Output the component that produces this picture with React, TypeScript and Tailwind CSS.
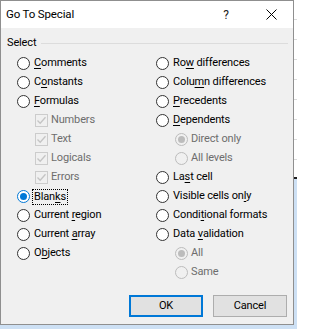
import React from "react";

type Item = {
  label: string;
  u?: number; // index of the access-key letter
  kind: "radio" | "check" | "subradio";
  checked?: boolean;
  disabled?: boolean;
  focus?: boolean;
};

const left: Item[] = [
  { label: "Comments", u: 0, kind: "radio" },
  { label: "Constants", u: 1, kind: "radio" },
  { label: "Formulas", u: 0, kind: "radio" },
  { label: "Numbers", kind: "check", checked: true, disabled: true },
  { label: "Text", kind: "check", checked: true, disabled: true },
  { label: "Logicals", kind: "check", checked: true, disabled: true },
  { label: "Errors", kind: "check", checked: true, disabled: true },
  { label: "Blanks", u: 4, kind: "radio", checked: true, focus: true },
  { label: "Current region", u: 8, kind: "radio" },
  { label: "Current array", u: 8, kind: "radio" },
  { label: "Objects", u: 1, kind: "radio" },
];

const right: Item[] = [
  { label: "Row differences", u: 2, kind: "radio" },
  { label: "Column differences", u: 4, kind: "radio" },
  { label: "Precedents", u: 0, kind: "radio" },
  { label: "Dependents", u: 0, kind: "radio" },
  { label: "Direct only", kind: "subradio", checked: true, disabled: true },
  { label: "All levels", kind: "subradio", disabled: true },
  { label: "Last cell", u: 2, kind: "radio" },
  { label: "Visible cells only", u: 16, kind: "radio" },
  { label: "Conditional formats", u: 5, kind: "radio" },
  { label: "Data validation", u: 5, kind: "radio" },
  { label: "All", kind: "subradio", checked: true, disabled: true },
  { label: "Same", kind: "subradio", disabled: true },
];

function Label({ item }: { item: Item }) {
  const text =
    item.u === undefined ? (
      item.label
    ) : (
      <>
        {item.label.slice(0, item.u)}
        <span className="underline underline-offset-2">{item.label[item.u]}</span>
        {item.label.slice(item.u + 1)}
      </>
    );
  return (
    <span
      className={
        (item.disabled ? "text-[#6d6d6d] " : "text-black ") +
        (item.focus
          ? "border border-dotted border-black px-px leading-[14px] -ml-[2px]"
          : "")
      }
    >
      {text}
    </span>
  );
}

function Radio({ checked, disabled }: { checked?: boolean; disabled?: boolean }) {
  if (disabled) {
    return (
      <span className="w-[13px] h-[13px] rounded-full border border-[#bcbcbc] bg-[#f0f0f0] flex items-center justify-center shrink-0">
        {checked && <span className="w-[7px] h-[7px] rounded-full bg-[#bcbcbc]" />}
      </span>
    );
  }
  if (checked) {
    return (
      <span className="w-[13px] h-[13px] rounded-full border border-[#0078d7] bg-white flex items-center justify-center shrink-0">
        <span className="w-[7px] h-[7px] rounded-full bg-[#0078d7]" />
      </span>
    );
  }
  return <span className="w-[13px] h-[13px] rounded-full border border-[#333333] bg-white shrink-0" />;
}

function Check() {
  return (
    <span className="w-[13px] h-[13px] border border-[#cccccc] bg-[#f0f0f0] flex items-center justify-center shrink-0">
      <svg width="11" height="11" viewBox="0 0 11 11">
        <path d="M1.5 5.5 L4.2 8.3 L9.5 2.2" fill="none" stroke="#c4c4c4" strokeWidth="1.3" />
      </svg>
    </span>
  );
}

function Row({ item }: { item: Item }) {
  if (item.kind === "check") {
    return (
      <div className="h-[19px] flex items-center pl-[18px] gap-[3px]">
        <Check />
        <Label item={item} />
      </div>
    );
  }
  if (item.kind === "subradio") {
    return (
      <div className="h-[19px] flex items-center pl-[19px] gap-[3px]">
        <Radio checked={item.checked} disabled />
        <Label item={item} />
      </div>
    );
  }
  return (
    <div className="h-[19px] flex items-center gap-[4px]">
      <Radio checked={item.checked} />
      <Label item={item} />
    </div>
  );
}

export default function App() {
  return (
    <div
      className="relative w-[297px] h-[329px] overflow-hidden bg-white text-[11px] tracking-[-0.15px]"
      style={{ fontFamily: 'Roboto, "Noto Sans", sans-serif' }}
    >
      {/* spreadsheet behind the dialog */}
      <div className="absolute inset-0 bg-[repeating-linear-gradient(to_bottom,transparent_0,transparent_19px,#dadada_19px,#dadada_20px)]" />
      <div className="absolute left-0 right-0 top-[177px] bottom-0 bg-[#cde0f4] border-t-2 border-[#1f1f1f]" />

      {/* dialog window */}
      <div className="absolute left-0 top-0 w-[294px] h-[325px] border border-[#8f8f8f] bg-[#f0f0f0] flex flex-col">
        <div className="h-[27px] bg-white flex items-center pl-[5px] shrink-0">
          <span className="text-black text-[11.5px] flex-1">Go To Special</span>
          <span className="w-[30px] text-center text-[#222] text-[12px] mr-[15px]">?</span>
          <span className="w-[30px] flex justify-center mr-[7px]">
            <svg width="11" height="11" viewBox="0 0 11 11">
              <path d="M0.5 0.5 L10.5 10.5 M10.5 0.5 L0.5 10.5" stroke="#000" strokeWidth="1" />
            </svg>
          </span>
        </div>

        <div className="flex items-center pl-[6px] pr-[5px] pt-[8px] h-[23px]">
          <span className="text-black">Select</span>
          <span className="flex-1 h-px bg-[#dcdcdc] ml-[5px]" />
        </div>

        <div className="grid grid-cols-[139px_1fr] pl-[16px] pt-[3px]">
          <div className="flex flex-col">
            {left.map((it) => (
              <Row key={it.label} item={it} />
            ))}
          </div>
          <div className="flex flex-col">
            {right.map((it) => (
              <Row key={it.label} item={it} />
            ))}
          </div>
        </div>

        <div className="flex justify-end gap-[10px] pr-[6px] pt-[13px]">
          <button className="w-[74px] h-[22px] border-2 border-[#0078d7] bg-[#e1e1e1] text-black text-[11px]">
            OK
          </button>
          <button className="w-[74px] h-[22px] border border-[#adadad] bg-[#e1e1e1] text-black text-[11px]">
            Cancel
          </button>
        </div>
      </div>
    </div>
  );
}
